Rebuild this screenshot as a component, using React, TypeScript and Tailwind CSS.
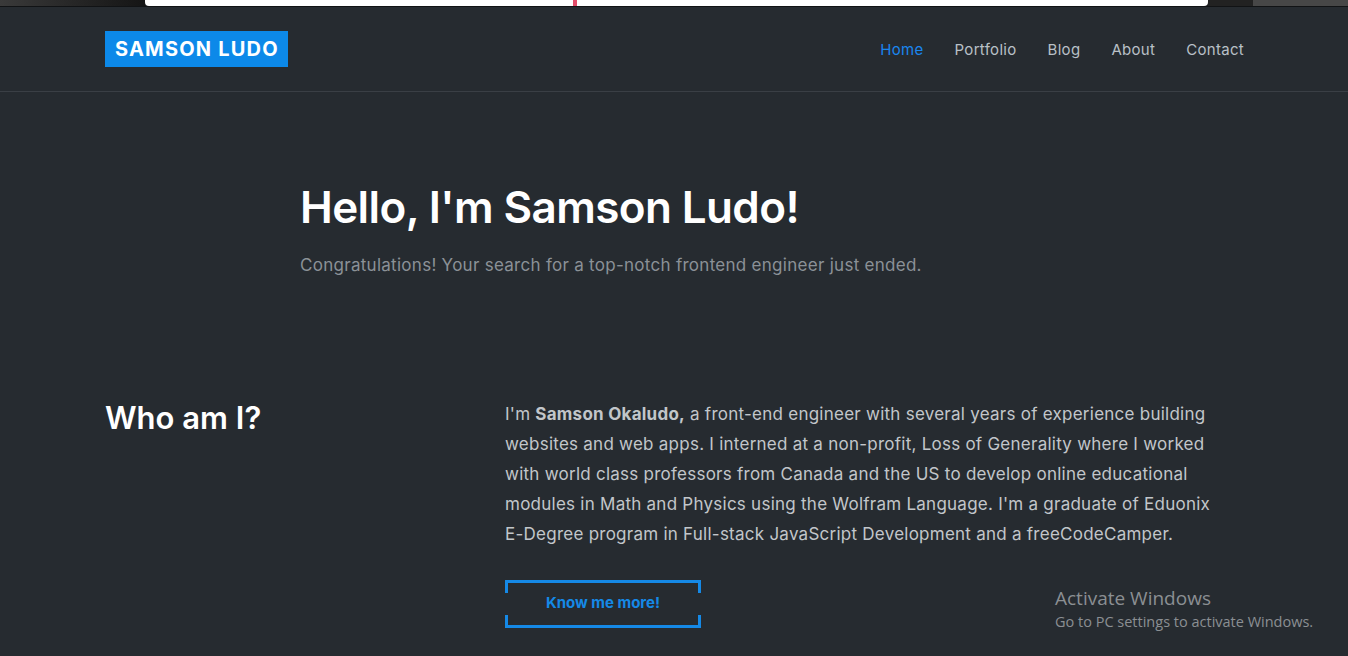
import React from 'react'

const links = ['Home', 'Portfolio', 'Blog', 'About', 'Contact']

function TopStrip() {
  return (
    <div className="h-[7px] bg-[#1b1d1f] flex border-b border-[#111315]">
      <div className="w-[145px] h-[6px] bg-gradient-to-r from-[#3a3a3a] to-[#151515]" />
      <div className="w-[1063px] h-[6px] bg-white rounded-b-[4px] relative">
        <div className="absolute left-[428px] top-0 w-[4px] h-[6px] bg-[#e44d6a]" />
      </div>
      <div className="w-[45px] h-[6px] bg-[#222]" />
      <div className="flex-1 h-[6px] bg-[#474747]" />
    </div>
  )
}

function Header() {
  return (
    <header className="border-b border-[#3a3f45]">
      <div className="w-[1140px] mx-auto h-[84px] flex items-center justify-between pl-px">
        <a className="bg-[#0c89e9] text-white font-bold text-[20px] leading-[36px] pl-[10px] pr-[9px] tracking-[1.2px]">
          SAMSON LUDO
        </a>
        <nav className="flex gap-[31px] text-[15px] tracking-[0.3px] pt-[2px]">
          {links.map((l, i) => (
            <a key={l} className={i === 0 ? 'text-[#1a86ee]' : 'text-[#b9c0c7]'}>
              {l}
            </a>
          ))}
        </nav>
      </div>
    </header>
  )
}

export default function App() {
  return (
    <div
      className="min-h-[656px] bg-[#262b30] relative overflow-hidden"
      style={{ fontFamily: "Inter, 'Open Sans', sans-serif" }}
    >
      <TopStrip />
      <Header />

      <section className="w-[1140px] mx-auto pl-[196px] pt-[87px]">
        <h1 className="text-white text-[44px] font-semibold leading-[56px] tracking-[-0.6px]">Hello, I'm Samson Ludo!</h1>
        <p className="text-[#8b9197] text-[17px] mt-[18px] tracking-[0.28px]">
          Congratulations! Your search for a top-notch frontend engineer just ended.
        </p>
      </section>

      <section className="w-[1140px] mx-auto pt-[120px] flex pl-px">
        <div className="w-[400px]">
          <h2 className="text-white text-[31px] font-semibold leading-[38px]">Who am I?</h2>
        </div>
        <div className="w-[730px]">
          <p className="text-[#c2c6ca] text-[17px] leading-[30px] tracking-[0.25px]">
            I'm <span className="font-bold">Samson Okaludo,</span> a front-end engineer with several years of experience building
            websites and web apps. I interned at a non-profit, Loss of Generality where I worked with world class
            professors from Canada and the US to develop online educational modules in Math and Physics using the
            Wolfram Language. I'm a graduate of Eduonix <span className="whitespace-nowrap">E-Degree</span> program in
            Full-stack JavaScript Development and a freeCodeCamper.
          </p>
          <button className="relative mt-[31px] w-[196px] h-[48px] border-y-[3px] border-[#1589e6] text-[#1589e6] font-bold text-[15px]">
            <span className="absolute left-0 top-0 w-[3px] h-[10px] bg-[#1589e6]" />
            <span className="absolute left-0 bottom-0 w-[3px] h-[10px] bg-[#1589e6]" />
            <span className="absolute right-0 top-0 w-[3px] h-[10px] bg-[#1589e6]" />
            <span className="absolute right-0 bottom-0 w-[3px] h-[10px] bg-[#1589e6]" />
            Know me more!
          </button>
        </div>
      </section>

      <div
        className="absolute left-[1055px] top-[585px] text-[#8b8f93]"
        style={{ fontFamily: "'Open Sans', sans-serif" }}
      >
        <div className="text-[19px] leading-[26px]">Activate Windows</div>
        <div className="text-[14.5px] leading-[20px] mt-[1px]">Go to PC settings to activate Windows.</div>
      </div>
    </div>
  )
}
